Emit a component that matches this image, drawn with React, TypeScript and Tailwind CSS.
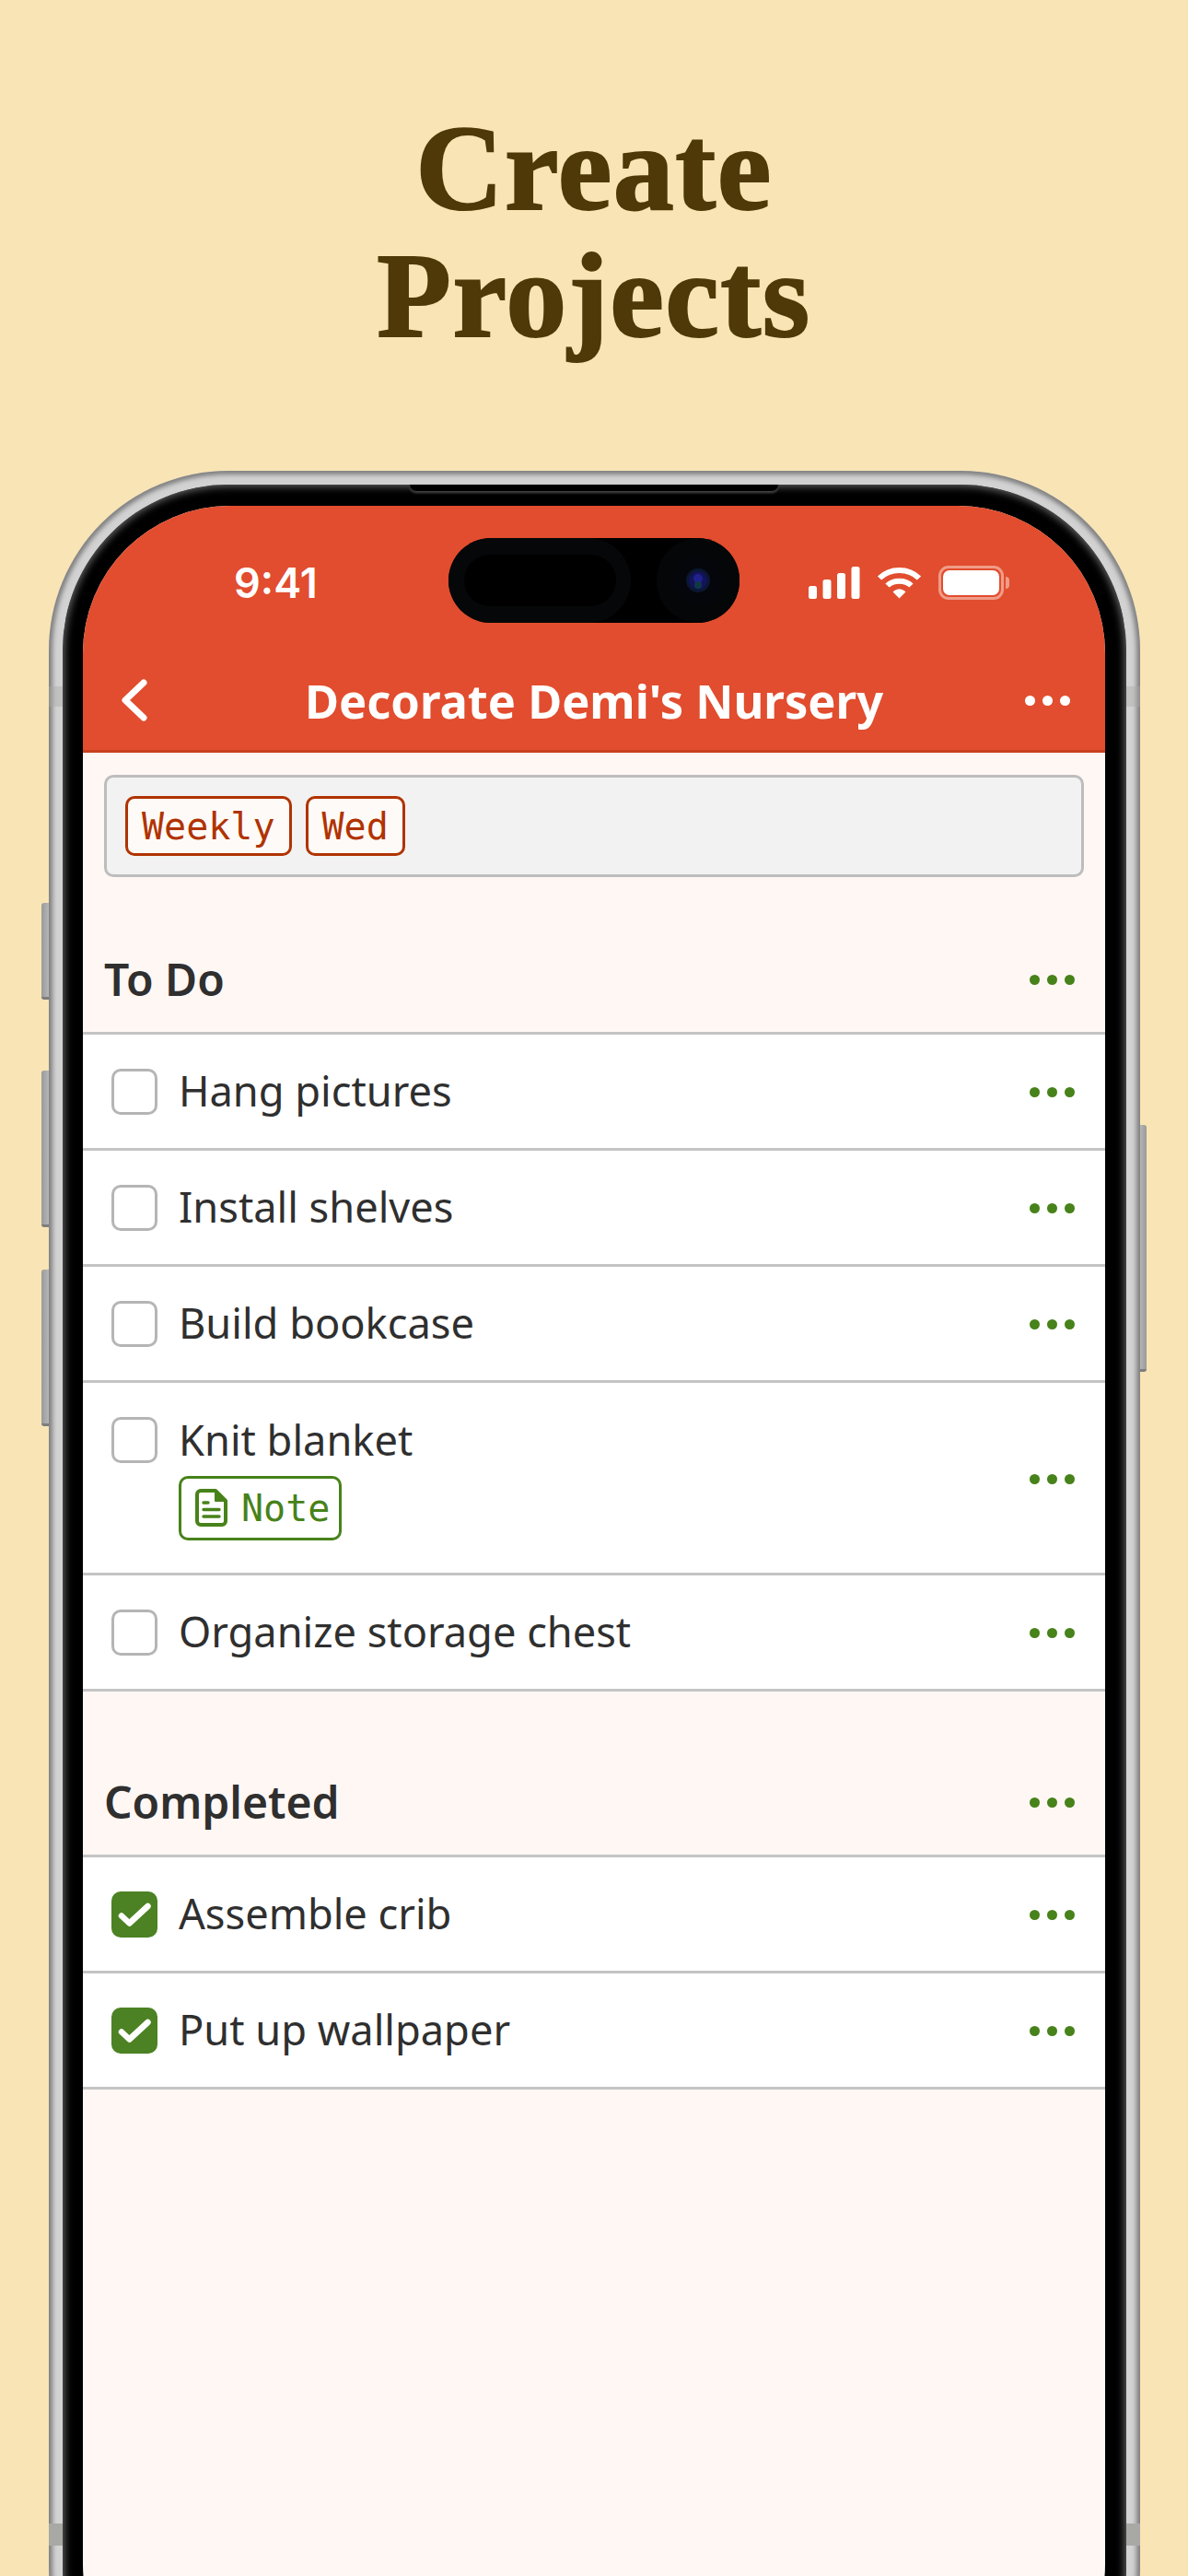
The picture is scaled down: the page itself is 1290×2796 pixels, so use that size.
function Dots({ color = 'bg-[#47821a]', className = '' }: { color?: string; className?: string }) {
  return (
    <div className={`flex gap-2 ${className}`}>
      <span className={`w-[11px] h-[11px] rounded-full ${color}`} />
      <span className={`w-[11px] h-[11px] rounded-full ${color}`} />
      <span className={`w-[11px] h-[11px] rounded-full ${color}`} />
    </div>
  );
}

function Box({ done }: { done?: boolean }) {
  if (done) {
    return (
      <div className="w-[50px] h-[50px] shrink-0 rounded-[10px] bg-[#4c8223]">
        <svg width="50" height="50" viewBox="0 0 50 50" fill="none" stroke="white" strokeWidth="6.5" strokeLinecap="round" strokeLinejoin="round">
          <path d="M11 26.5 19.5 34.5 39.5 16" />
        </svg>
      </div>
    );
  }
  return <div className="w-[50px] h-[50px] shrink-0 rounded-[10px] border-[3px] border-[#b5b5b5] bg-white" />;
}

function NoteIcon() {
  return (
    <svg width="35" height="41" viewBox="0 0 35 41" fill="none" stroke="#47821a" strokeWidth="4" strokeLinecap="round" strokeLinejoin="round">
      <path d="M6 2H22L33 13V35A4 4 0 0 1 29 39H6A4 4 0 0 1 2 35V6A4 4 0 0 1 6 2Z" />
      <path d="M22 2V13H33Z" fill="#47821a" strokeWidth="2" />
      <path d="M9 15H14M9 22.5H26M9 30H26" strokeWidth="3.4" />
    </svg>
  );
}

function Row({ title, done, note }: { title: string; done?: boolean; note?: boolean }) {
  return (
    <div className={`flex items-center justify-between bg-white border-b-[3px] border-[#c4c4c4] pl-[31px] pr-[33px] ${note ? 'h-[209px]' : 'h-[126px]'}`}>
      <div className={`flex gap-[23px] ${note ? 'items-start mt-[1px]' : 'items-center'}`}>
        <Box done={done} />
        <div className="flex flex-col">
          <span className="text-[45.2px] leading-[50px] pb-[2px] text-[#2f2f2f]">{title}</span>
          {note && (
            <div className="mt-[12px] w-[177px] h-[70px] flex items-center gap-[15px] pl-[15px] bg-white border-[3px] border-[#47821a] rounded-[10px] text-[#47821a]">
              <NoteIcon />
              <span className="font-['DejaVu_Sans_Mono',monospace] text-[40px] leading-none">Note</span>
            </div>
          )}
        </div>
      </div>
      <Dots className="mt-[2px]" />
    </div>
  );
}

function Section({ title, className, children }: { title: string; className: string; children: React.ReactNode }) {
  return (
    <div className={className}>
      <div className="h-[117px] flex items-center justify-between border-b-[3px] border-[#c4c4c4] pl-[23px] pr-[33px]">
        <h2 className="text-[48px] font-semibold text-[#2f2f2f] leading-none">{title}</h2>
        <Dots />
      </div>
      {children}
    </div>
  );
}

function Tag({ label }: { label: string }) {
  return (
    <span className="h-[65px] flex items-center px-[15px] bg-[#fefaf7] border-[3px] border-[#b03300] rounded-[10px] text-[#b03300] font-['DejaVu_Sans_Mono',monospace] text-[40px] leading-none">
      {label}
    </span>
  );
}

function StatusIcons() {
  return (
    <div className="flex items-center gap-[18px]">
      <svg width="56" height="35" viewBox="0 0 56 35" fill="white">
        <rect x="0" y="21" width="9" height="14" rx="2.5" />
        <rect x="15.5" y="14" width="9" height="21" rx="2.5" />
        <rect x="31" y="7" width="9" height="28" rx="2.5" />
        <rect x="46.5" y="0" width="9" height="35" rx="2.5" />
      </svg>
      <svg width="49" height="35" viewBox="0 0 49 35" fill="none" stroke="white" strokeWidth="6">
        <path d="M3 12.5C14.5 1 34.5 1 46 12.5" />
        <path d="M11.5 20.5C18 14 31 14 37.5 20.5" />
        <path d="M19 27.5 24.5 33 30 27.5C27 24.5 22 24.5 19 27.5Z" fill="white" stroke="white" strokeWidth="2" />
      </svg>
      <div className="flex items-center gap-[2px]">
        <div className="w-[71px] h-[37px] rounded-[11px] border-[3px] border-[#f09c88] p-[2px]">
          <div className="w-full h-full rounded-[7px] bg-white" />
        </div>
        <div className="w-[4px] h-[13px] rounded-r-full bg-[#f09c88]" />
      </div>
    </div>
  );
}

function Island() {
  return (
    <div className="absolute left-[397px] top-[35px] w-[316px] h-[92px] rounded-[46px] bg-black flex items-center justify-between">
      <div className="w-[198px] h-[92px] rounded-[46px] bg-[#060708] flex items-center justify-center">
        <div className="w-[165px] h-[56px] rounded-[28px] bg-black" />
      </div>
      <div className="w-[90px] h-[92px] rounded-full bg-[#050608] flex items-center justify-center">
        <svg width="52" height="52" viewBox="0 0 52 52">
          <circle cx="26" cy="26" r="26" fill="#04060c" />
          <circle cx="26" cy="26" r="13" fill="#0a1730" />
          <circle cx="26" cy="26" r="10" fill="#14125a" />
          <circle cx="26" cy="24" r="5" fill="#20228c" />
          <circle cx="26" cy="31" r="4" fill="#0f3a44" />
        </svg>
      </div>
    </div>
  );
}

export default function App() {
  return (
    <div className="h-[2796px] overflow-hidden bg-[#f8e4b5] font-['Noto_Sans',sans-serif]">
      <h1 className="pt-[114px] h-[511px] text-center font-['Liberation_Serif',serif] font-bold text-[132px] leading-[138px] tracking-[1.5px] text-[#4f3908] [-webkit-text-stroke:2px_#4f3908]">
        Create
        <br />
        Projects
      </h1>

      {/* phone */}
      <div className="relative ml-[53px] w-[1185px] h-[2470px]">
        {/* side buttons */}
        <div className="absolute -left-[8px] top-[469px] w-[12px] h-[105px] rounded-l-[3px] bg-linear-to-r from-[#9a9a9a] to-[#c4c4c4] border-b-[3px] border-[#7d7d7d]" />
        <div className="absolute -left-[8px] top-[651px] w-[12px] h-[170px] rounded-l-[3px] bg-linear-to-r from-[#9a9a9a] to-[#c4c4c4] border-b-[3px] border-[#7d7d7d]" />
        <div className="absolute -left-[8px] top-[867px] w-[12px] h-[170px] rounded-l-[3px] bg-linear-to-r from-[#9a9a9a] to-[#c4c4c4] border-b-[3px] border-[#7d7d7d]" />
        <div className="absolute -right-[7px] top-[710px] w-[11px] h-[268px] rounded-r-[3px] bg-linear-to-l from-[#9a9a9a] to-[#c4c4c4] border-b-[3px] border-[#7d7d7d]" />

        <div className="relative h-full rounded-[195px] bg-[#d2d2d2] shadow-[inset_0_0_5px_4px_#7f7f7f] p-[15px]">
          <div className="relative h-full rounded-[180px] bg-black shadow-[inset_0_0_9px_2px_#666666] pt-[23px] pb-[23px] pl-[22px] pr-[23px]">
            {/* speaker lip */}
            <div className="absolute left-[377px] top-0 w-[400px] h-[7px] rounded-b-[14px] bg-black shadow-[0_2px_3px_#4a4a4a]" />

            <div className="relative h-full rounded-[160px] overflow-hidden bg-[#fff7f4]">
              {/* header */}
              <div className="h-[268px] bg-[#e14d2e] border-b-[3px] border-[#c8401f] text-white">
                <div className="h-[166px] flex items-center justify-between pt-[1px] pl-[164px] pr-[104px]">
                  <span className="font-['Inter',sans-serif] font-semibold text-[45px] leading-none">9:41</span>
                  <StatusIcons />
                </div>
                <div className="relative h-[90px] flex items-center justify-center">
                  <svg className="absolute left-[42px] top-[22px]" width="28" height="46" viewBox="0 0 28 46" fill="none" stroke="white" strokeWidth="7" strokeLinecap="round" strokeLinejoin="round">
                    <path d="M24 4 4 23 24 42" />
                  </svg>
                  <span className="pt-[2px] font-bold text-[50.6px] leading-none">Decorate Demi's Nursery</span>
                  <div className="absolute right-[38px] top-[40px]">
                    <Dots color="bg-white" />
                  </div>
                </div>
              </div>

              <Island />

              {/* tags */}
              <div className="mt-[24px] mx-[23px] h-[111px] flex items-center gap-[15px] px-[20px] bg-[#f2f2f2] border-[3px] border-[#bdbdbd] rounded-[10px]">
                <Tag label="Weekly" />
                <Tag label="Wed" />
              </div>

              <Section title="To Do" className="mt-[54px]">
                <Row title="Hang pictures" />
                <Row title="Install shelves" />
                <Row title="Build bookcase" />
                <Row title="Knit blanket" note />
                <Row title="Organize storage chest" />
              </Section>

              <Section title="Completed" className="mt-[63px]">
                <Row title="Assemble crib" done />
                <Row title="Put up wallpaper" done />
              </Section>
            </div>
          </div>
        </div>

        {/* antenna bands */}
        <div className="absolute left-0 top-[234px] w-[15px] h-[22px] bg-[#a8a8a5]/40" />
        <div className="absolute right-0 top-[234px] w-[15px] h-[22px] bg-[#a8a8a5]/40" />
        <div className="absolute left-0 top-[2228px] w-[15px] h-[24px] bg-[#a8a8a5]" />
        <div className="absolute right-0 top-[2228px] w-[15px] h-[24px] bg-[#a8a8a5]" />
      </div>
    </div>
  );
}
